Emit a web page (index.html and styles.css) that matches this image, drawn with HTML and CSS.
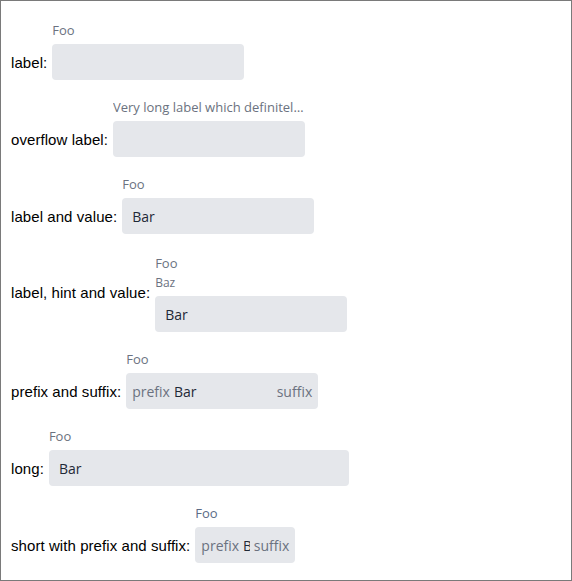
FILE: index.html
```html
<!DOCTYPE html>
<html lang="en">
<head>
<meta charset="utf-8">
<title>Text fields</title>
<link rel="stylesheet" href="styles.css">
</head>
<body>
<div class="frame">
  <div class="row">
    <span class="row__label">label:</span>
    <div class="field">
      <label class="field__label">Foo</label>
      <div class="control"><input class="control__input" value=""></div>
    </div>
  </div>

  <div class="row">
    <span class="row__label">overflow label:</span>
    <div class="field">
      <label class="field__label">Very long label which definitely does not fit into the field</label>
      <div class="control"><input class="control__input" value=""></div>
    </div>
  </div>

  <div class="row">
    <span class="row__label">label and value:</span>
    <div class="field">
      <label class="field__label">Foo</label>
      <div class="control"><input class="control__input" value="Bar"></div>
    </div>
  </div>

  <div class="row row--hint">
    <span class="row__label">label, hint and value:</span>
    <div class="field">
      <label class="field__label">Foo</label>
      <span class="field__hint">Baz</span>
      <div class="control"><input class="control__input" value="Bar"></div>
    </div>
  </div>

  <div class="row">
    <span class="row__label">prefix and suffix:</span>
    <div class="field">
      <label class="field__label">Foo</label>
      <div class="control">
        <span class="control__affix">prefix</span>
        <input class="control__input" value="Bar">
        <span class="control__affix">suffix</span>
      </div>
    </div>
  </div>

  <div class="row">
    <span class="row__label">long:</span>
    <div class="field field--long">
      <label class="field__label">Foo</label>
      <div class="control"><input class="control__input" value="Bar"></div>
    </div>
  </div>

  <div class="row">
    <span class="row__label">short with prefix and suffix:</span>
    <div class="field field--short">
      <label class="field__label field__label--blue">Foo</label>
      <div class="control">
        <span class="control__affix">prefix</span>
        <input class="control__input" value="Bar">
        <span class="control__affix">suffix</span>
      </div>
    </div>
  </div>
</div>
</body>
</html>
```

FILE: styles.css
```css
html, body {
  margin: 0;
  padding: 0;
  background: #ffffff;
}

.frame {
  box-sizing: border-box;
  width: 572px;
  height: 581px;
  border: 1px solid #7a7a7a;
  padding: 19px 10px;
  display: flex;
  flex-direction: column;
  gap: 17px;
}

.row {
  display: flex;
  align-items: flex-end;
  gap: 5px;
}

.row--hint {
  align-items: center;
  padding-top: 2px;
}

.row__label {
  font-family: "Liberation Sans", Arial, sans-serif;
  font-size: 15px;
  line-height: 34px;
  letter-spacing: 0.07px;
  color: #000000;
  white-space: nowrap;
}

.field {
  width: 192px;
  display: flex;
  flex-direction: column;
  font-family: "Open Sans", "Noto Sans", sans-serif;
}

.field--long {
  width: 300px;
}

.field--short {
  width: 100px;
}

.field__label {
  font-size: 13px;
  line-height: 20px;
  color: #6b7280;
  white-space: nowrap;
  overflow: hidden;
  text-overflow: ellipsis;
}

.field__label--blue {
  color: #5b6b85;
}

.field__hint {
  font-size: 12px;
  line-height: 19px;
  color: #6b7280;
}

.control {
  margin-top: 4px;
  box-sizing: border-box;
  height: 36px;
  padding: 0 6px;
  background: #e5e7eb;
  border-radius: 4px;
  display: flex;
  align-items: center;
  font-size: 14px;
}

.control__affix {
  flex-shrink: 0;
  color: #6b7280;
  white-space: nowrap;
}

.control__input {
  flex: 1 1 0;
  width: 0;
  min-width: 0;
  margin: 0;
  padding: 0 4px;
  border: 0;
  outline: none;
  background: transparent;
  font: inherit;
  color: #1f2937;
}
```
